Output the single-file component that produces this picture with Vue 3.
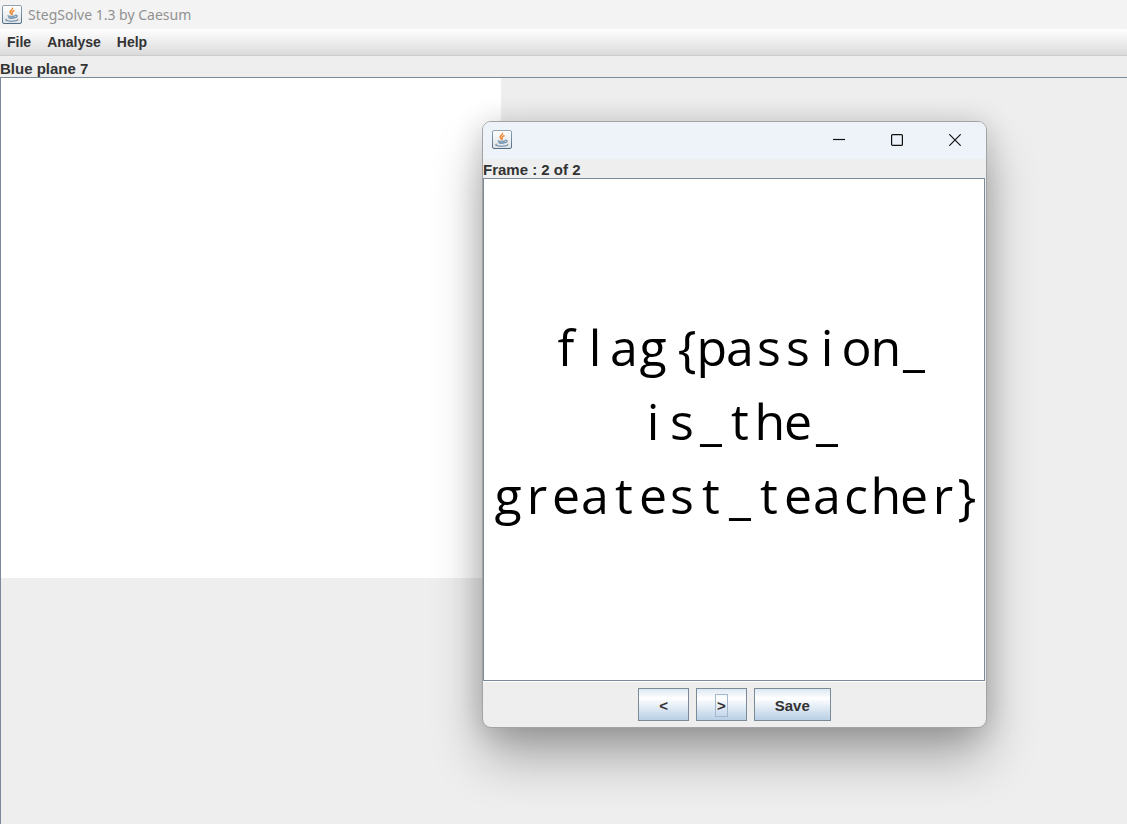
<script setup>
import { ref } from 'vue'

const menus = ['File', 'Analyse', 'Help']
const frame = ref(2)
const flagLines = ['flag{passion_', 'is_the_', 'greatest_teacher}']
</script>

<template>
  <div class="app">
    <svg width="0" height="0" class="defs" aria-hidden="true">
      <defs>
        <linearGradient id="tile" x1="0" y1="0" x2="0" y2="1">
          <stop offset="0" stop-color="#ffffff" />
          <stop offset="1" stop-color="#dfe1e4" />
        </linearGradient>
        <linearGradient id="edge" x1="0" y1="0" x2="0" y2="1">
          <stop offset="0" stop-color="#8fa3b4" />
          <stop offset="1" stop-color="#526f88" />
        </linearGradient>
        <symbol id="java" viewBox="0 0 20 20">
          <rect x="0.5" y="0.5" width="19" height="18" rx="1.5" fill="url(#tile)" stroke="url(#edge)" />
          <path d="M10.600 3.300c.4 1.500-2.900 2.200-2.500 3.900.2.900 1 1.300 1.300 2M12 5.800c-1.500.7-2.400 1.200-2.100 2 .2.600.7.8.2 1.600" fill="none" stroke="#ee8b3a" stroke-width="1.500" stroke-linecap="round" />
          <path d="M5.300 10c2 .9 5.700.9 8.200.1l-1.200 3.300c-1.700.8-4 .8-5.600 0z" fill="#84a1b9" />
          <path d="M13.300 10.200c2.700-.5 2.400 2.300-.7 2.600M4.300 14.200c-1.700 1 1.500 2 5.200 2 3.600 0 6.600-.5 6.300-1.800" fill="none" stroke="#6888a3" stroke-width="1.100" stroke-linecap="round" />
        </symbol>
      </defs>
    </svg>

    <header class="titlebar">
      <svg class="java" aria-hidden="true"><use href="#java" /></svg>
      <span>StegSolve 1.3 by Caesum</span>
    </header>
    <nav class="menubar">
      <button v-for="m in menus" :key="m" type="button">{{ m }}</button>
    </nav>
    <div class="status">Blue plane 7</div>
    <main class="viewport">
      <div class="plane"></div>
    </main>

    <section class="dialog">
      <header class="dialog-title">
        <svg class="java" aria-hidden="true"><use href="#java" /></svg>
        <div class="controls">
          <button type="button" aria-label="Minimize">
            <svg width="12" height="12"><path d="M0 5.500H12" /></svg>
          </button>
          <button type="button" aria-label="Maximize">
            <svg width="12" height="12"><rect x="0.600" y="0.600" width="10.800" height="10.800" rx="1" /></svg>
          </button>
          <button type="button" aria-label="Close">
            <svg width="12" height="12"><path d="M.3.3 11.700 11.700M11.700.3.3 11.700" /></svg>
          </button>
        </div>
      </header>
      <div class="frame-label">Frame : {{ frame }} of 2</div>
      <div class="canvas">
        <div v-for="line in flagLines" :key="line" class="flag"><span
          v-for="(ch, i) in line"
          :key="i"
          :class="{ open: ch === '{', close: ch === '}' }"
        >{{ ch }}</span></div>
      </div>
      <footer class="actions">
        <button type="button" @click="frame = 1"><span>&lt;</span></button>
        <button type="button" @click="frame = 2"><span class="focused">&gt;</span></button>
        <button type="button"><span>Save</span></button>
      </footer>
    </section>
  </div>
</template>

<style>
body {
  margin: 0;
}
</style>

<style scoped>
.app {
  position: relative;
  display: flex;
  flex-direction: column;
  min-height: 100vh;
  overflow: hidden;
  background: #eee;
  color: #333;
  font: bold 15px/20px "Liberation Sans", Arial, sans-serif;
}
.defs {
  position: absolute;
}
button {
  margin: 0;
  padding: 0;
  border: 0;
  background: none;
  color: inherit;
  font: inherit;
}
.java {
  display: block;
  width: 20px;
  height: 20px;
}
.titlebar {
  display: flex;
  align-items: center;
  gap: 6px;
  height: 29px;
  padding-left: 2px;
  background: #f3f3f3;
  color: #919191;
  font: 14px/20px "Noto Sans", "Open Sans", sans-serif;
}
.menubar {
  display: flex;
  gap: 16px;
  height: 26px;
  padding-left: 7px;
  border-bottom: 1px solid #ccc;
  background: linear-gradient(#fff, #dadada);
  font-size: 14px;
}
.status {
  height: 18px;
  padding-top: 3px;
  line-height: 20px;
}
.viewport {
  flex: 1;
  border-top: 1px solid #7a8a99;
  border-left: 1px solid #7a8a99;
}
.plane {
  width: 500px;
  height: 500px;
  background: #fff;
}
.dialog {
  position: absolute;
  top: 121px;
  left: 482px;
  border: 1px solid #a3a3a5;
  border-radius: 9px;
  background: #eee;
  box-shadow: 0 30px 52px -2px rgba(0, 0, 0, 0.32), 0 2px 30px rgba(0, 0, 0, 0.16);
}
.dialog-title {
  display: flex;
  align-items: center;
  justify-content: space-between;
  height: 35px;
  padding: 0 2px 2px 9px;
  border-radius: 8px 8px 0 0;
  background: #eef3fa;
}
.controls {
  display: flex;
}
.controls button {
  display: grid;
  place-items: center;
  width: 58px;
  height: 35px;
}
.controls svg {
  fill: none;
  stroke: #111;
  stroke-width: 1.2;
}
.frame-label {
  height: 19px;
  line-height: 22px;
}
.canvas {
  display: flex;
  flex-direction: column;
  align-items: center;
  justify-content: center;
  box-sizing: border-box;
  width: 502px;
  height: 503px;
  margin-right: 1px;
  padding: 0 0 18px 12px;
  border: 1px solid #7a8a99;
  background: #fff;
  color: #000;
}
.flag {
  font: 500 50px/74px "Open Sans", sans-serif;
  white-space: nowrap;
}
.flag span {
  display: inline-block;
  width: 29px;
  text-align: center;
}
.flag .open {
  text-align: right;
}
.flag .close {
  text-align: left;
}
.actions {
  display: flex;
  justify-content: center;
  gap: 7px;
  padding: 6px 0;
  border-top: 1px solid #fff;
}
.actions button {
  height: 33px;
  padding: 1px 18px 0;
  border: 1px solid #7a8a99;
  background: linear-gradient(#dde8f3, #fff 30%, #b8cfe5);
}
.actions span {
  display: block;
  padding: 1px 1px 0;
  border: 1px solid transparent;
}
.actions .focused {
  border-color: #a3b8cc;
}
</style>
